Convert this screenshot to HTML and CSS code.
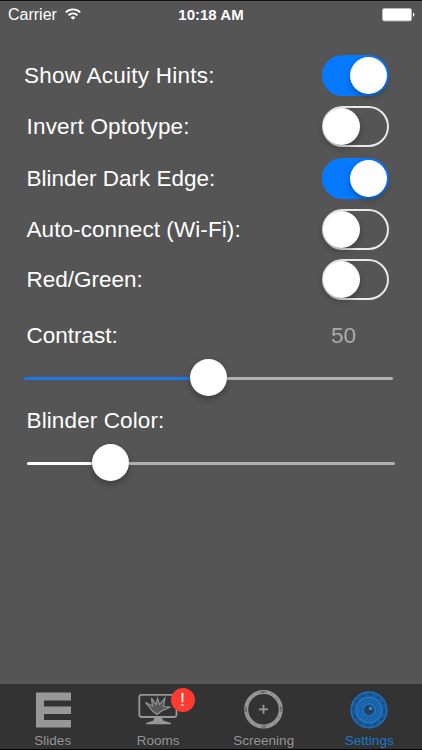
FILE: index.html
```
<!DOCTYPE html>
<html lang="en">

<head>
  <meta charset="UTF-8">
  <meta name="viewport" content="width=device-width, initial-scale=1.0">
  <title>Settings</title>
  <link rel="stylesheet" href="styles.css">
</head>

<body>
  <header class="status">
    <div class="carrier">
      <span>Carrier</span>
      <svg class="wifi" width="16" height="12" viewBox="0 0 16 12" fill="none" stroke="#fff" stroke-width="1.9">
        <path d="M.8 4.4a10.2 10.2 0 0 1 14.4 0" />
        <path d="M3.5 7.2a6.4 6.4 0 0 1 9 0" />
        <path d="M8 11.8L5.6 9.4a3.4 3.4 0 0 1 4.8 0z" fill="#fff" stroke="none" />
      </svg>
    </div>
    <span class="time">10:18 AM</span>
    <svg class="battery" width="33" height="14" viewBox="0 0 33 14">
      <rect x=".5" y=".5" width="29" height="12.4" rx="1.8" fill="#fff" stroke="#bbb" />
      <path d="M31 4.6q1.4.5 1.4 2.1T31 8.8z" fill="#fff" />
    </svg>
  </header>

  <main class="settings">
    <div class="row">
      <span class="label label-first">Show Acuity Hints:</span>
      <span class="switch on"></span>
    </div>
    <div class="row">
      <span class="label label-invert">Invert Optotype:</span>
      <span class="switch"></span>
    </div>
    <div class="row">
      <span class="label">Blinder Dark Edge:</span>
      <span class="switch on"></span>
    </div>
    <div class="row">
      <span class="label label-auto">Auto-connect (Wi-Fi):</span>
      <span class="switch"></span>
    </div>
    <div class="row row-last">
      <span class="label">Red/Green:</span>
      <span class="switch"></span>
    </div>
    <div class="row row-contrast">
      <span class="label">Contrast:</span>
      <span class="value">50</span>
    </div>
    <div class="slider slider-contrast">
      <span class="fill"></span>
      <span class="knob"></span>
      <span class="rest"></span>
    </div>
    <div class="row row-color">
      <span class="label label-color">Blinder Color:</span>
    </div>
    <div class="slider">
      <span class="fill"></span>
      <span class="knob"></span>
      <span class="rest"></span>
    </div>
  </main>

  <nav class="tabs">
    <a class="tab">
      <svg width="44" height="44" viewBox="0 0 44 44" fill="#979797">
        <path d="M5 4.5h35v8H13v6h27V26H13v6h27v7.5H5z" />
      </svg>
      <span>Slides</span>
    </a>
    <a class="tab">
      <svg width="44" height="44" viewBox="0 0 44 44" fill="none" stroke="#979797">
        <rect x="3.3" y="6.8" width="37.2" height="22.2" rx="2.5" stroke-width="1.8" />
        <path d="M18.5 29.5H26l1 3 8 2.5v1.2H10V35l7.5-2.5z" fill="#979797" stroke="none" />
        <path d="M9.500 14.500l7 3.500-1-8 4.500 6.500 1.500-6.500 2 6.500 5.500-6.500-1.500 8.500 7 .5-9 4-4.500 3.500-4.500-3.500z" fill="#5a5a5a" stroke-width="1.100" />
      </svg>
      <b class="badge">!</b>
      <span>Rooms</span>
    </a>
    <a class="tab">
      <svg width="44" height="44" viewBox="0 0 44 44" fill="none" stroke="#979797">
        <circle cx="21.5" cy="21.3" r="17.3" stroke-width="4" />
        <path d="M21.5 3v2M21.5 37.500v2M3 21.300h2M38 21.300h2" stroke="#666" stroke-width="5" />
        <circle cx="21.5" cy="21.3" r="17.3" stroke="#858585" stroke-width="1.2" stroke-dasharray="3 3.79" />
        <path d="M21.500 16.800v9M17 21.300h9" stroke-width="1.8" />
      </svg>
      <span>Screening</span>
    </a>
    <a class="tab active">
      <svg width="44" height="44" viewBox="0 0 44 44" fill="none" stroke="#1c74c4">
        <circle cx="22" cy="22" r="18.5" fill="#195b98" stroke="none" />
        <circle cx="22" cy="22" r="17.9" stroke-width="1.2" />
        <circle cx="22" cy="22" r="15.5" stroke="#28486a" stroke-width="2.6" stroke-dasharray="2.5 5.6" />
        <circle cx="22" cy="22" r="12.5" stroke-width="2" />
        <circle cx="22" cy="22" r="9.5" stroke-width="2" stroke-dasharray="1 .6" />
        <circle cx="22" cy="22" r="6.5" stroke-width="1.5" />
        <circle cx="22" cy="22" r="4.5" fill="#243f59" stroke="none" />
        <circle cx="23.5" cy="20.5" r="1.8" fill="#4289c6" stroke="none" />
      </svg>
      <span>Settings</span>
    </a>
  </nav>
</body>

</html>
```
FILE: styles.css
```
*,
*::before,
*::after {
  box-sizing: border-box;
}

body {
  margin: 0;
  height: 750px;
  display: flex;
  flex-direction: column;
  border-top: 1px solid #111;
  border-bottom: 1px solid #000;
  background-color: #555;
  color: #fff;
  font-family: "Liberation Sans", Arial, sans-serif;
}

/* Status bar */
.status {
  height: 27px;
  padding: 0 7px 0 8px;
  display: grid;
  grid-template-columns: 1fr auto 1fr;
  align-items: center;
  font-size: 16px;
}

.carrier {
  display: flex;
  align-items: center;
  gap: 8px;
}

.wifi {
  margin-top: -2px;
}

.time {
  margin-right: 1px;
  font-size: 15px;
  font-weight: bold;
}

.battery {
  justify-self: end;
}

/* Options */
.settings {
  flex-grow: 1;
  padding: 27px 33px 0 26.5px;
}

.row {
  height: 41px;
  margin-bottom: 10.3px;
  display: flex;
  justify-content: space-between;
  align-items: center;
}

.row-last {
  margin-top: -1.3px;
}

.label {
  padding-top: 2px;
  font-size: 22.5px;
  white-space: nowrap;
}

.label-first {
  margin-left: -2.5px;
  padding-top: 0;
  letter-spacing: .25px;
}

.label-invert {
  padding-top: 0;
  letter-spacing: .2px;
}

.label-auto {
  letter-spacing: .08px;
}

.label-color {
  letter-spacing: .12px;
}

.switch {
  width: 67px;
  height: 41px;
  display: flex;
  border: 2px solid #e9e9e9;
  border-radius: 21px;
}

.switch::before {
  content: "";
  width: 37px;
  height: 37px;
  margin-left: -1px;
  border-radius: 50%;
  background-color: #fff;
  box-shadow: 0 3px 6px rgba(0, 0, 0, .3);
}

.switch.on {
  justify-content: flex-end;
  border-color: #067aff;
  background-color: #067aff;
}

.row-contrast {
  height: 30px;
  margin: 20px 0 9px;
}

.value {
  margin-right: 33px;
  padding-top: 2px;
  color: #aaa;
  font-size: 22.5px;
}

.row-color {
  height: 30px;
  margin: 9px 0;
}

/* Sliders */
.slider {
  width: 368.5px;
  height: 37px;
  display: flex;
  align-items: center;
}

.slider-contrast {
  margin-left: -2.5px;
}

.fill,
.rest {
  height: 3px;
  margin-top: 3px;
  border-radius: 2px;
  background-color: #b0b0b0;
}

.fill {
  width: 65px;
  background-color: #fff;
}

.slider-contrast .fill {
  width: 166px;
  background-color: #1c78e6;
}

.rest {
  flex-grow: 1;
}

.knob {
  width: 37px;
  height: 37px;
  border-radius: 50%;
  background-color: #fff;
  box-shadow: 0 3px 7px rgba(0, 0, 0, .3);
}

/* Tab bar */
.tabs {
  height: 65px;
  display: flex;
  background-color: #333;
}

.tab {
  position: relative;
  flex: 1;
  padding-top: 4px;
  display: flex;
  flex-direction: column;
  align-items: center;
  color: #939393;
  font-size: 13.5px;
  line-height: 17px;
}

.tab svg {
  flex-shrink: 0;
}

.tab.active {
  color: #1876cf;
}

.badge {
  position: absolute;
  top: 4px;
  left: 65px;
  width: 24px;
  height: 24px;
  border-radius: 50%;
  background-color: #ff3b30;
  color: #fff;
  font-size: 18px;
  font-weight: normal;
  line-height: 24px;
  text-align: center;
}
```
